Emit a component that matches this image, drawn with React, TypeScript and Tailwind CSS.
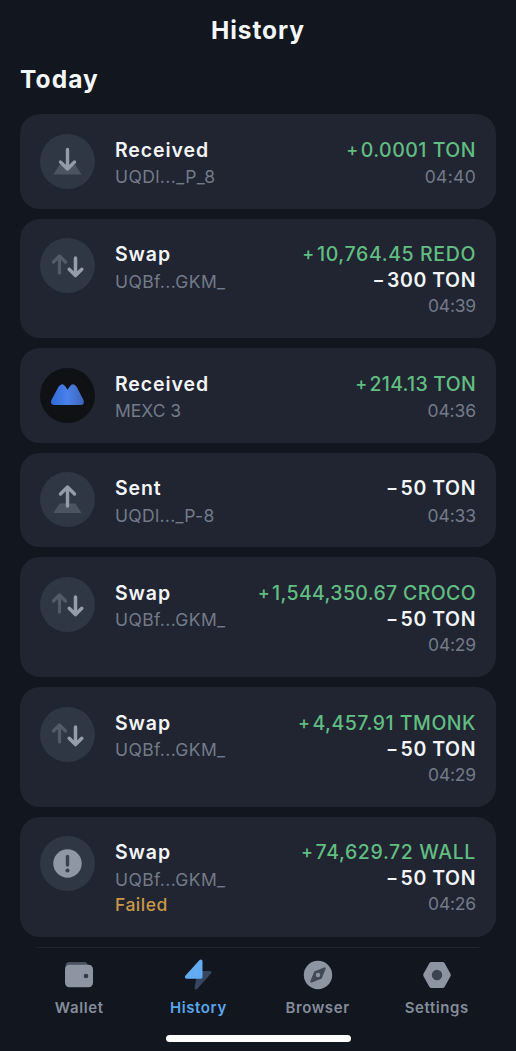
import type { ReactNode } from "react";

type Kind = "received" | "sent" | "swap" | "mexc" | "failed";

interface Tx {
  kind: Kind;
  title: string;
  titleClass: string;
  from: string;
  fromClass: string;
  plus?: string;
  plusClass?: string;
  minus?: string;
  time: string;
  timeClass: string;
  failed?: boolean;
}

const transactions: Tx[] = [
  { kind: "received", title: "Received", titleClass: "tracking-[0.9px]", from: "UQDl..._P_8", fromClass: "tracking-[0.4px]", plus: "0.0001 TON", plusClass: "tracking-[0.5px]", time: "04:40", timeClass: "tracking-[0.3px]" },
  { kind: "swap", title: "Swap", titleClass: "tracking-[0.9px]", from: "UQBf...GKM_", fromClass: "tracking-[0.38px]", plus: "10,764.45 REDO", plusClass: "tracking-[0.62px]", minus: "300 TON", time: "04:39", timeClass: "tracking-[-0.2px]" },
  { kind: "mexc", title: "Received", titleClass: "tracking-[0.9px]", from: "MEXC 3", fromClass: "tracking-[0px]", plus: "214.13 TON", plusClass: "tracking-[0.27px]", time: "04:36", timeClass: "tracking-[-0.1px]" },
  { kind: "sent", title: "Sent", titleClass: "tracking-[0.9px]", from: "UQDl..._P-8", fromClass: "tracking-[0.3px]", minus: "50 TON", time: "04:33", timeClass: "tracking-[-0.1px]" },
  { kind: "swap", title: "Swap", titleClass: "tracking-[0.9px]", from: "UQBf...GKM_", fromClass: "tracking-[0.38px]", plus: "1,544,350.67 CROCO", plusClass: "tracking-[0.35px]", minus: "50 TON", time: "04:29", timeClass: "tracking-[-0.2px]" },
  { kind: "swap", title: "Swap", titleClass: "tracking-[0.9px]", from: "UQBf...GKM_", fromClass: "tracking-[0.38px]", plus: "4,457.91 TMONK", plusClass: "tracking-[0.5px]", minus: "50 TON", time: "04:29", timeClass: "tracking-[-0.2px]" },
  { kind: "failed", title: "Swap", titleClass: "tracking-[0.9px]", from: "UQBf...GKM_", fromClass: "tracking-[0.38px]", plus: "74,629.72 WALL", plusClass: "tracking-[0.62px]", minus: "50 TON", time: "04:26", timeClass: "tracking-[-0.2px]", failed: true },
];

function TxIcon({ kind }: { kind: Kind }) {
  return (
    <svg viewBox="0 0 55 55" className="mt-[19.5px] size-[55px] shrink-0" fill="none" strokeLinecap="round" strokeLinejoin="round">
      <circle cx="27.5" cy="27.5" r="27.5" fill={kind === "mexc" ? "#101114" : "#303744"} />
      {kind === "received" && (
        <>
          <path d="M19.5 31h16l6 9.5h-28z" fill="#4c5361" />
          <path d="M27.5 15.5v18M20.5 28l7 7 7-7" stroke="#949ba9" strokeWidth="3.4" />
        </>
      )}
      {kind === "sent" && (
        <>
          <path d="M19.5 31.5h16l6 9.5h-28z" fill="#4c5361" />
          <path d="M27.5 34V16M20.5 22l7-7 7 7" stroke="#949ba9" strokeWidth="3.4" />
        </>
      )}
      {kind === "swap" && (
        <>
          <path d="M19.5 35V19.5M13.5 24l6-6 6 6" stroke="#535a68" strokeWidth="3.2" />
          <path d="M35.5 20v17M29.2 31.3l6.3 6.3 6.3-6.3" stroke="#959caa" strokeWidth="3.5" />
        </>
      )}
      {kind === "mexc" && (
        <>
          <defs>
            <linearGradient id="mexc" x1="11" y1="34" x2="44" y2="34" gradientUnits="userSpaceOnUse">
              <stop stopColor="#316ad8" />
              <stop offset="0.5" stopColor="#4a81ea" />
              <stop offset="1" stopColor="#3e64b8" />
            </linearGradient>
          </defs>
          <path d="M11.3 32.3 18.5 18.8Q22 13.8 25.4 18.4L27.5 21.8 29.8 18.4Q33.2 13.8 36.7 18.8L43.6 32.3Q45 36.6 41 37H14Q10 36.6 11.3 32.3Z" fill="url(#mexc)" />
        </>
      )}
      {kind === "failed" && (
        <>
          <circle cx="27.5" cy="27.5" r="14.2" fill="#8f96a4" />
          <path d="M27.5 20.5v8.5" stroke="#3a414e" strokeWidth="3.4" />
          <circle cx="27.5" cy="34.5" r="2.1" fill="#3a414e" />
        </>
      )}
    </svg>
  );
}

function TxCard({ tx }: { tx: Tx }) {
  const tall = tx.plus && tx.minus;
  return (
    <div className={`flex shrink-0 rounded-[20px] bg-[#202531] px-5 ${tall ? "h-[119.7px]" : "h-[94.6px]"}`}>
      <TxIcon kind={tx.kind} />
      <div className="ml-5 flex flex-col items-start pt-[22.5px] whitespace-nowrap">
        <div className={`text-[19.5px] leading-[26px] font-semibold text-[#f2f4f8] ${tx.titleClass}`}>{tx.title}</div>
        <div className={`mt-[1.5px] text-[17.5px] leading-[26px] text-[#737a88] ${tx.fromClass}`}>{tx.from}</div>
        {tx.failed && <div className="-mt-[1px] text-[17.5px] leading-[26px] font-medium tracking-[0.5px] text-[#c9984a]">Failed</div>}
      </div>
      <div className="ml-auto flex flex-col items-end pt-[22.5px] whitespace-nowrap">
        {tx.plus && (
          <div className={`flex gap-[2px] text-[19.5px] leading-[26px] font-medium text-[#62bd82] ${tx.plusClass}`}>
            <span className="text-[18px]">+</span>
            <span>{tx.plus}</span>
          </div>
        )}
        {tx.minus && (
          <div className="flex gap-[2px] text-[19.5px] leading-[26px] font-semibold tracking-[0.55px] text-[#f2f4f8]">
            <span className="text-[18px]">−</span>
            <span>{tx.minus}</span>
          </div>
        )}
        <div className={`text-[17.5px] leading-[26px] text-[#737a88] ${tx.timeClass} ${tall ? "" : "mt-[1.5px]"}`}>{tx.time}</div>
      </div>
    </div>
  );
}

function Tab({ label, className, children }: { label: string; className: string; children: ReactNode }) {
  return (
    <div className={`flex w-[119.2px] flex-col items-center ${className}`}>
      <svg viewBox="0 0 32 32" className="size-8" fill="none" strokeLinejoin="round">
        {children}
      </svg>
      <span className="mt-[7px] text-[15px] leading-5 font-semibold tracking-[0.6px]">{label}</span>
    </div>
  );
}

export default function App() {
  return (
    <div className="flex h-[1051px] w-[516px] flex-col overflow-hidden bg-[#11161f] font-['Inter','Liberation_Sans',sans-serif]">
      <header className="flex h-[61px] shrink-0 items-center justify-center text-[24.5px] font-bold text-[#f4f6fa]">
        <h1 className="tracking-[0.9px]">History</h1>
      </header>
      <h2 className="flex h-[53px] shrink-0 items-start px-5 text-[24.5px] leading-[37px] font-bold tracking-[1.1px] text-[#f4f6fa]">Today</h2>

      <main className="flex min-h-0 flex-1 flex-col gap-[10px] overflow-hidden px-5">
        {transactions.map((tx, i) => (
          <TxCard key={i} tx={tx} />
        ))}
        <div className="h-[95px] shrink-0 rounded-[20px] bg-[#202531]" />
      </main>

      <nav className="flex h-[103px] shrink-0 flex-col bg-[#11161f]">
        <div className="flex justify-center pt-[11px]">
          <Tab label="Wallet" className="text-[#858c99]">
            <path d="M2.5 9V7Q2.5 3 6.5 3H21Q25 3 25 8Z" fill="#4b515e" />
            <rect x="2" y="5.7" width="28" height="22.5" rx="4.5" fill="#8d94a2" />
            <circle cx="23" cy="17" r="2.3" fill="#343b48" />
          </Tab>
          <Tab label="History" className="text-[#5ca6ec]">
            <path d="M17 13.5h11L14 29z" fill="#35465f" stroke="#35465f" strokeWidth="3" />
            <path d="M18.8 2.2V18H4.6Z" fill="#63acf2" stroke="#63acf2" strokeWidth="3.4" />
          </Tab>
          <Tab label="Browser" className="text-[#858c99]">
            <circle cx="16" cy="16" r="14.2" fill="#8d94a2" />
            <path d="M22.5 9.5 18.7 18.7 9.5 22.5 13.3 13.3Z" fill="#424957" stroke="#424957" strokeWidth="2.4" />
            <circle cx="16" cy="16" r="2.2" fill="#8d94a2" />
          </Tab>
          <Tab label="Settings" className="text-[#858c99]">
            <path d="M10.5 5.5h11L27.3 16l-5.8 10.5h-11L4.7 16Z" fill="#8d94a2" stroke="#8d94a2" strokeWidth="5" />
            <circle cx="16" cy="16" r="5.2" fill="#3c4350" />
          </Tab>
        </div>
        <div className="mx-auto mt-[17px] h-[7px] w-[185px] rounded-full bg-white" />
      </nav>
    </div>
  );
}
